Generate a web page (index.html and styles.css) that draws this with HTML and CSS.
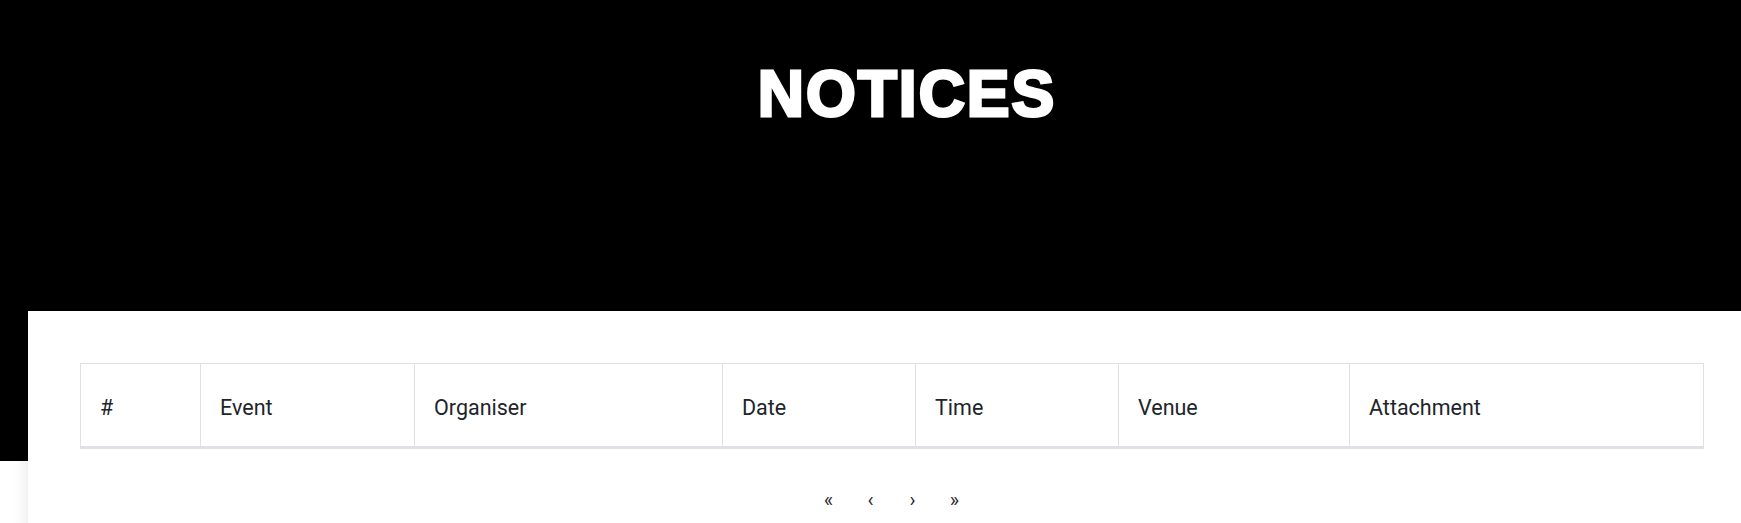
FILE: index.html
```html
<!DOCTYPE html>
<html lang="en">
<head>
<meta charset="utf-8">
<title>Notices</title>
<link rel="stylesheet" href="styles.css">
</head>
<body>
<header class="hero">
  <h1 class="hero-title">NOTICES</h1>
</header>
<main class="card">
  <table class="notices">
    <colgroup>
      <col class="c-num">
      <col class="c-event">
      <col class="c-org">
      <col class="c-date">
      <col class="c-time">
      <col class="c-venue">
      <col class="c-attach">
    </colgroup>
    <thead>
      <tr>
        <th>#</th>
        <th>Event</th>
        <th>Organiser</th>
        <th>Date</th>
        <th>Time</th>
        <th>Venue</th>
        <th>Attachment</th>
      </tr>
    </thead>
  </table>
  <nav class="pager">
    <a class="pager-item" href="#">«</a>
    <a class="pager-item" href="#">‹</a>
    <a class="pager-item" href="#">›</a>
    <a class="pager-item" href="#">»</a>
  </nav>
</main>
</body>
</html>
```
FILE: styles.css
```css
html, body {
  margin: 0;
  padding: 0;
  overflow-x: hidden;
  background: #ffffff;
}

body {
  font-family: Roboto, "Liberation Sans", sans-serif;
  color: #212529;
}

.hero {
  background: #000000;
  height: 461px;
  padding-left: 73px;
  box-sizing: border-box;
  overflow: hidden;
}

.hero-title {
  margin: 62px 0 0 0;
  text-align: center;
  font-family: "Liberation Sans", Arial, sans-serif;
  font-weight: 700;
  font-size: 64px;
  line-height: 64px;
  letter-spacing: 2px;
  color: #ffffff;
  -webkit-text-stroke: 3px #ffffff;
}

.card {
  position: relative;
  margin: -150px -14px 0 28px;
  padding: 52px 52px 20px 52px;
  background: #ffffff;
  box-shadow: 0 0 15px rgba(0, 0, 0, 0.12);
}

.notices {
  width: 1623px;
  table-layout: fixed;
  border-collapse: collapse;
}

.c-num { width: 120px; }
.c-event { width: 214px; }
.c-org { width: 308px; }
.c-date { width: 193px; }
.c-time { width: 203px; }
.c-venue { width: 231px; }
.c-attach { width: 354px; }

.notices th {
  border: 1px solid #dee2e6;
  border-bottom: 3px solid #dee2e6;
  padding: 28px 19px 22px 19px;
  text-align: left;
  font-weight: 400;
  font-size: 21.5px;
  line-height: 32px;
  color: #212529;
}

.pager {
  display: flex;
  justify-content: center;
  width: 1623px;
  margin-top: 38px;
}

.pager-item {
  display: block;
  width: 42px;
  text-align: center;
  font-size: 20px;
  line-height: 26px;
  color: #2b2b2b;
  text-decoration: none;
}
```
